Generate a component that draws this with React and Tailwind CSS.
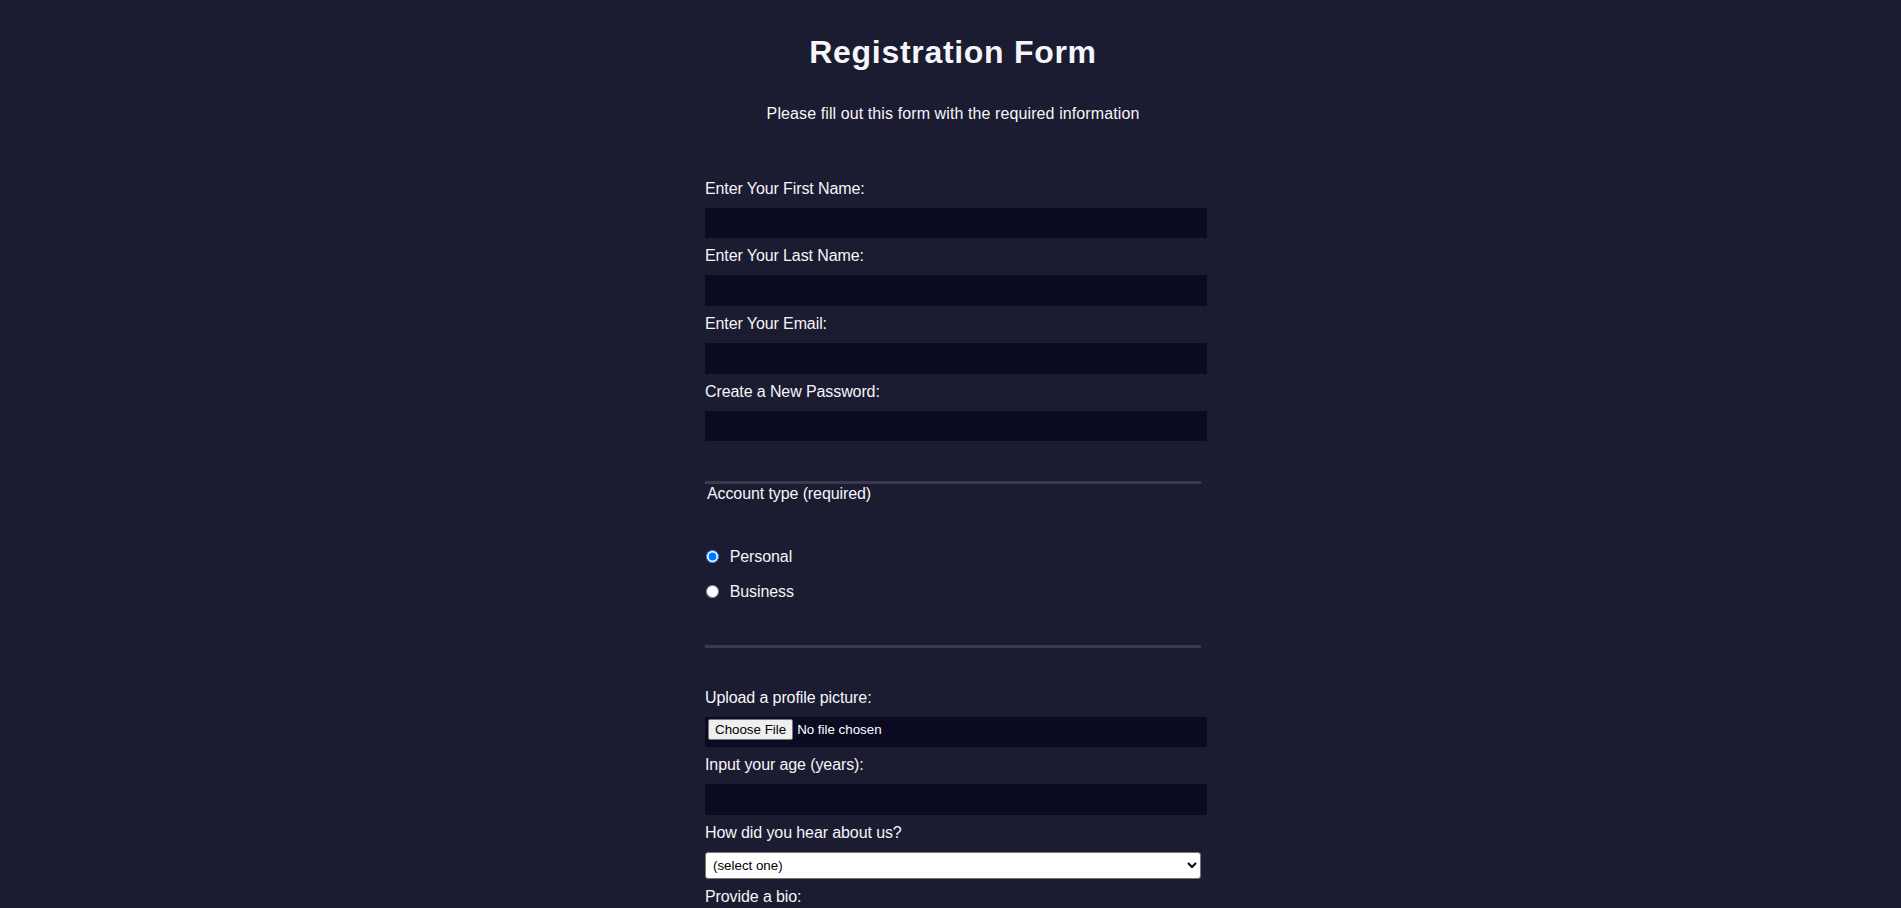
import React from "react";

const textFields = [
  { id: "first-name", label: "Enter Your First Name:", type: "text" },
  { id: "last-name", label: "Enter Your Last Name:", type: "text" },
  { id: "email", label: "Enter Your Email:", type: "email" },
  { id: "new-password", label: "Create a New Password:", type: "password" },
];

const labelCls = "block my-[8px] text-[16px] leading-[19px] tracking-[-0.1px]";
const radioLabelCls = "flex items-center h-[26.67px] my-[8px] text-[16px] leading-[19px] tracking-[-0.1px]";
const inputCls =
  "block mt-[10px] w-[calc(100%+6px)] h-[30.67px] px-[2px] py-[1px] bg-[#0a0a23] border border-[#0a0a23] text-white text-[13.33px] outline-none";

const App = () => {
  return (
    <div
      className="min-h-screen w-full bg-[#1b1b32] text-[#f5f6f7] pt-[33px] pl-[5px]"
      style={{ fontFamily: '"Liberation Sans", Arial, sans-serif' }}
    >
      <h1 className="text-[32px] font-bold leading-[38.6px] text-center tracking-[0.7px]">
        Registration Form
      </h1>
      <p className="mt-[32px] mb-[16px] text-[16px] leading-[19px] text-center tracking-[0.1px]">
        Please fill out this form with the required information
      </p>

      <form className="w-[500px] mx-auto pb-[32px]" onSubmit={(e) => e.preventDefault()}>
        {/* Personal details */}
        <fieldset className="mx-[2px] py-[32px] border-b-[3px] border-[#3b3b4f]">
          {textFields.map((f) => (
            <label key={f.id} htmlFor={f.id} className={labelCls}>
              {f.label}
              <input id={f.id} name={f.id} type={f.type} className={inputCls} />
            </label>
          ))}
        </fieldset>

        {/* Account type */}
        <fieldset className="mx-[2px] py-[32px] border-b-[3px] border-[#3b3b4f]">
          <legend className="px-[2px] text-[16px] leading-[19px] tracking-[-0.1px]">Account type (required)</legend>
          <label htmlFor="personal-account" className={radioLabelCls}>
            <input
              id="personal-account"
              type="radio"
              name="account-type"
              defaultChecked
              className="w-[13px] h-[13px] m-0 mr-[6.67px] ml-[0.7px]"
            />
            <span className="ml-[4.4px]">Personal</span>
          </label>
          <label htmlFor="business-account" className={radioLabelCls}>
            <input
              id="business-account"
              type="radio"
              name="account-type"
              className="w-[13px] h-[13px] m-0 mr-[6.67px] ml-[0.7px]"
            />
            <span className="ml-[4.4px]">Business</span>
          </label>
        </fieldset>

        {/* Extra info */}
        <fieldset className="mx-[2px] py-[32px]">
          <label htmlFor="profile-picture" className={labelCls}>
            Upload a profile picture:
            <input
              id="profile-picture"
              type="file"
              className="block mt-[10px] w-[calc(100%+6px)] h-[30.67px] px-[2px] py-[1px] bg-[#0a0a23] border border-[#0a0a23] text-white text-[13.33px] leading-[15.33px] tracking-normal file:mr-[4px] file:px-[6px] file:py-[2px] file:bg-[#efefef] file:text-black file:border file:border-solid file:border-[#767676] file:rounded-[2px] file:text-[13.33px]"
            />
          </label>
          <label htmlFor="age" className={labelCls}>
            Input your age (years):
            <input id="age" type="number" min="13" max="120" className={inputCls} />
          </label>
          <label htmlFor="referrer" className={labelCls}>
            How did you hear about us?
            <select
              id="referrer"
              defaultValue=""
              className="block mt-[10px] w-full h-[26.67px] pl-[3px] bg-white text-black text-[13.33px] tracking-normal border border-[#767676] rounded-[3px]"
            >
              <option value="">(select one)</option>
              <option value="1">freeCodeCamp News</option>
              <option value="2">freeCodeCamp YouTube Channel</option>
              <option value="3">freeCodeCamp Forum</option>
              <option value="4">Other</option>
            </select>
          </label>
          <label htmlFor="bio" className={labelCls}>
            Provide a bio:
            <textarea
              id="bio"
              rows="3"
              placeholder="I like coding on the beach..."
              className="block mt-[10px] w-[calc(100%+6px)] min-h-[32px] px-[2px] py-[1px] bg-[#0a0a23] border border-[#0a0a23] text-white text-[13.33px] tracking-normal outline-none"
            />
          </label>
        </fieldset>

        <input
          type="submit"
          value="Submit"
          className="block w-[60%] min-w-[300px] h-[32px] mx-auto my-[16px] text-[17.6px] bg-[#3b3b4f] border border-white text-[#f5f6f7]"
        />
      </form>
    </div>
  );
};

export default App;
